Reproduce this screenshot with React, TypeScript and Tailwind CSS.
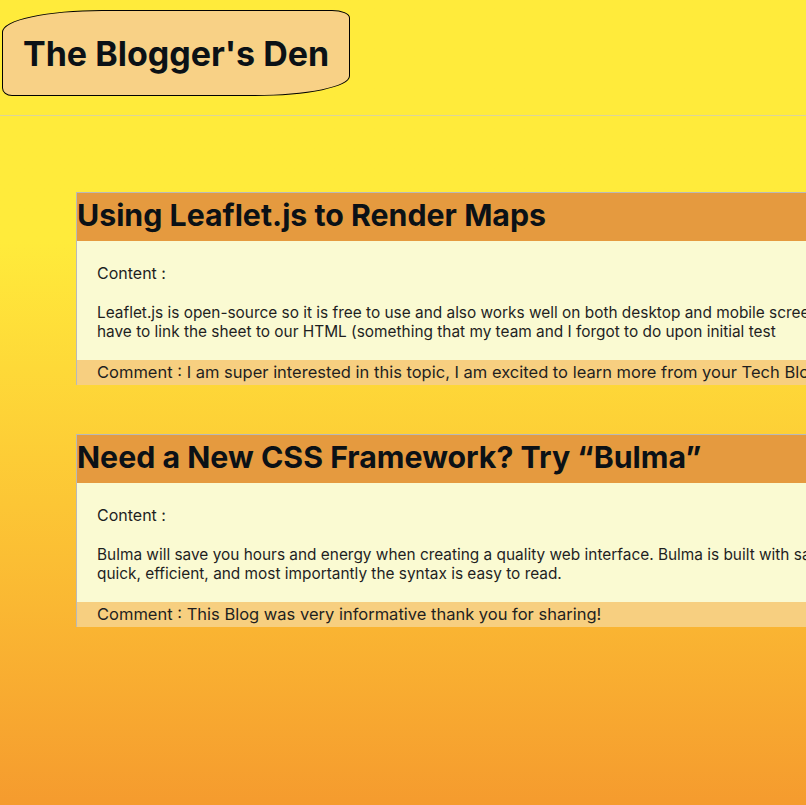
const posts = [
  {
    title: 'Using Leaflet.js to Render Maps',
    lines: [
      'Leaflet.js is open-source so it is free to use and also works well on both desktop and mobile screens. To use it we first',
      'have to link the sheet to our HTML (something that my team and I forgot to do upon initial test',
    ],
    comment:
      'I am super interested in this topic, I am excited to learn more from your Tech Blog!',
  },
  {
    title: 'Need a New CSS Framework? Try \u201CBulma\u201D',
    lines: [
      'Bulma will save you hours and energy when creating a quality web interface. Bulma is built with sass and it is',
      'quick, efficient, and most importantly the syntax is easy to read.',
    ],
    comment: 'This Blog was very informative thank you for sharing!',
  },
];

const PostCard = ({ post }: { post: (typeof posts)[number] }) => {
  return (
    <article className="w-[1000px] shrink-0 border-l border-t border-[#b9b9b9]">
      <h2 className="bg-[#e59a3f] pt-[4px] pb-[8px] text-[30.3px] leading-9 font-bold text-[#0b1116]">
        {post.title}
      </h2>
      <div className="bg-[#fafad2] px-5 pt-5 pb-[19px] text-[#1f1f1f]">
        <p className="text-[16px] leading-6">Content :</p>
        <p className="mt-[18px] text-[15.4px] leading-[19px] whitespace-nowrap">
          {post.lines[0]}
          <br />
          {post.lines[1]}
        </p>
      </div>
      <div className="bg-[#f7cf80] px-5 text-[16.5px] leading-[25px] text-[#1f1f1f] whitespace-nowrap">
        Comment : {post.comment}
      </div>
    </article>
  );
};

export default function App() {
  return (
    <div className="h-screen overflow-hidden bg-linear-to-b from-[#ffeb3b] from-30% to-[#f59b2e] font-['Inter','Noto_Sans',sans-serif]">
      <header className="h-[116px] border-b border-[#dcd49a] pt-[10px] pl-[2px]">
        <div className="inline-block border border-black bg-[#f8d186] px-5 pt-[20px] pb-[18px] rounded-[100px_18px_95px_10px/22px_8px_20px_8px]">
          <h1 className="text-[34px] leading-[46px] font-bold text-[#0b1116]">
            The Blogger's Den
          </h1>
        </div>
      </header>
      <main className="flex flex-col gap-[49px] pl-[76px] pt-[76px]">
        {posts.map((post) => (
          <PostCard key={post.title} post={post} />
        ))}
      </main>
    </div>
  );
}
